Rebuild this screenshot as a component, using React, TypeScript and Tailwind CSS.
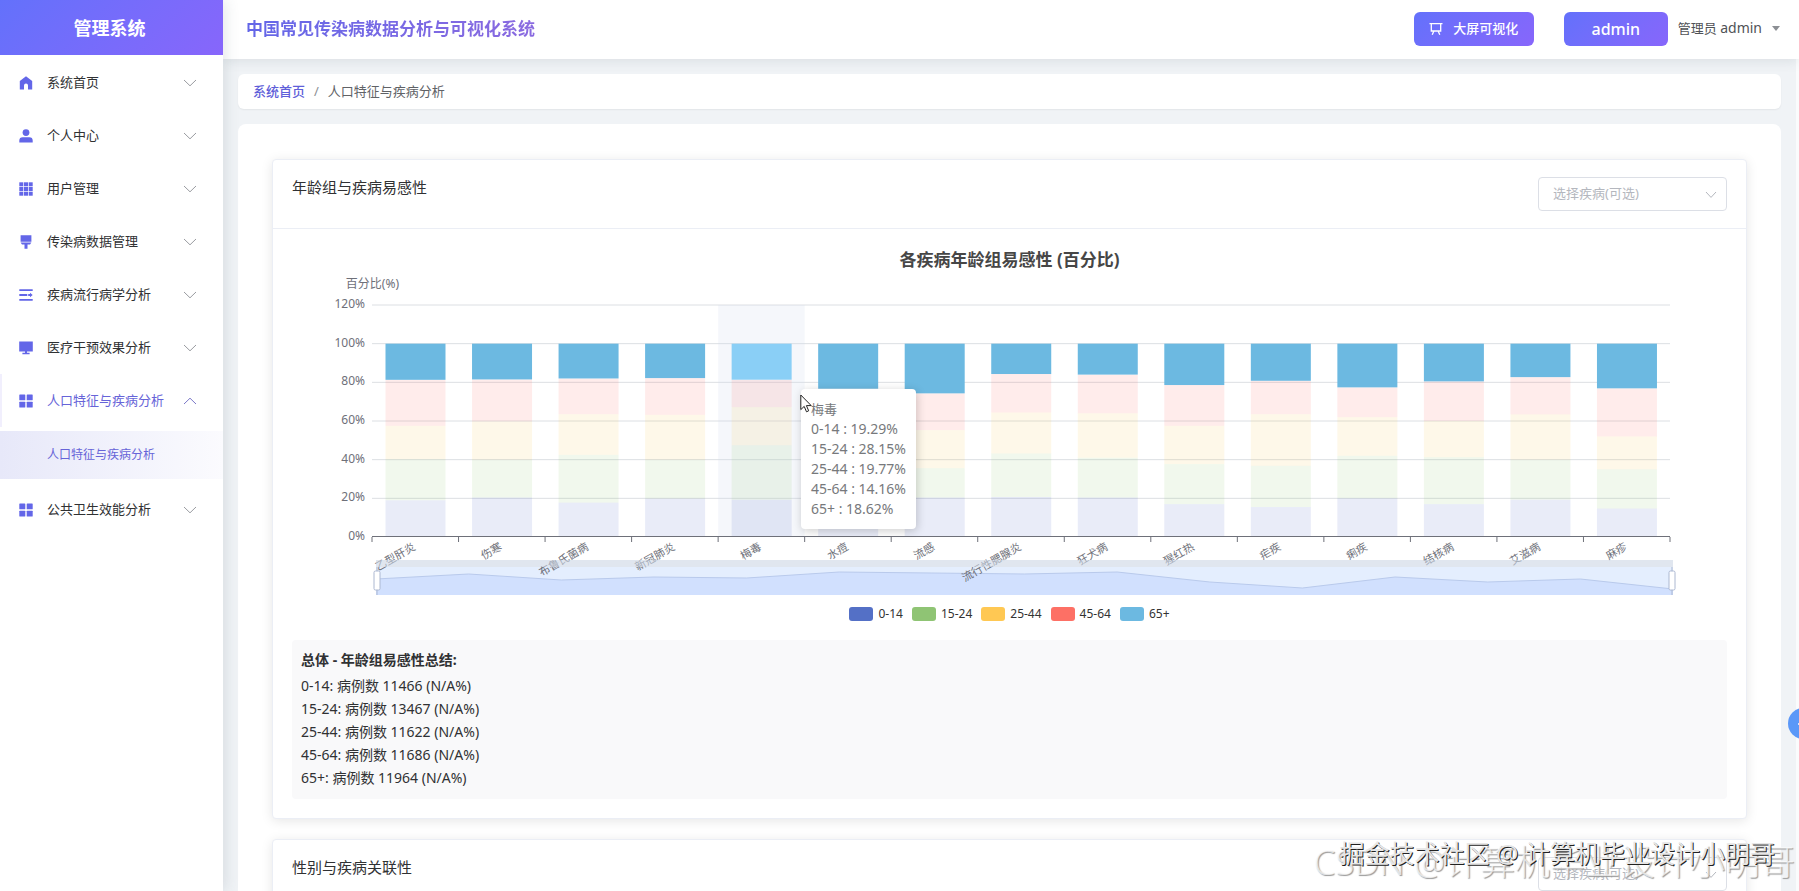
import type { ReactNode } from 'react';

const AGE_GROUPS = [
  { name: '0-14', color: '#5470c6', swatch: 'bg-[#5470c6]' },
  { name: '15-24', color: '#91cc75', swatch: 'bg-[#8fc474]' },
  { name: '25-44', color: '#fac858', swatch: 'bg-[#ffc853]' },
  { name: '45-64', color: '#ff6e63', swatch: 'bg-[#fd7065]' },
  { name: '65+', color: '#6cb9e1', swatch: 'bg-[#6cb9e1]' },
];

// upper bound of every age group in the stack, in percent
const DISEASES = [
  { name: '乙型肝炎', stack: [19, 40.2, 57.5, 81.3, 100] },
  { name: '伤寒', stack: [20.4, 40, 59.8, 81.5, 100] },
  { name: '布鲁氏菌病', stack: [17.8, 42.5, 63.5, 82, 100] },
  { name: '新冠肺炎', stack: [19.9, 40, 63.2, 82.2, 100] },
  { name: '梅毒', stack: [19.29, 47.44, 67.21, 81.37, 100] },
  { name: '水痘', stack: [20, 40, 58, 76.7, 100] },
  { name: '流感', stack: [20.4, 35.6, 55.3, 74.3, 100] },
  { name: '流行性腮腺炎', stack: [20.7, 43.2, 64.4, 84.3, 100] },
  { name: '狂犬病', stack: [20.4, 41, 64, 84, 100] },
  { name: '猩红热', stack: [17, 37.7, 57.5, 78.6, 100] },
  { name: '疟疾', stack: [15.5, 36.8, 63.5, 80.8, 100] },
  { name: '痢疾', stack: [20, 42, 62, 77.4, 100] },
  { name: '结核病', stack: [17, 41.3, 60, 80.5, 100] },
  { name: '艾滋病', stack: [19.3, 40, 63.4, 82.7, 100] },
  { name: '麻疹', stack: [14.7, 35, 52, 76.9, 100] },
];

const TOOLTIP = [
  '0-14 : 19.29%',
  '15-24 : 28.15%',
  '25-44 : 19.77%',
  '45-64 : 14.16%',
  '65+ : 18.62%',
];

const SUMMARY = [
  '0-14: 病例数 11466 (N/A%)',
  '15-24: 病例数 13467 (N/A%)',
  '25-44: 病例数 11622 (N/A%)',
  '45-64: 病例数 11686 (N/A%)',
  '65+: 病例数 11964 (N/A%)',
];

const Icon = ({ children }: { children: ReactNode }) => (
  <svg viewBox="0 0 14 14" className="h-3.5 w-3.5 shrink-0 text-[#6366e8]" fill="currentColor">
    {children}
  </svg>
);

const HomeIcon = () => (
  <Icon>
    <path d="M7 0.2 13.2 5V13.4H9V9.4a2 2 0 0 0-4 0v4H0.8V5Z" />
  </Icon>
);

const UserIcon = () => (
  <Icon>
    <circle cx="7" cy="3.6" r="3.4" />
    <path d="M0.3 13.6v-2A3.4 3.4 0 0 1 3.7 8.2h6.6a3.4 3.4 0 0 1 3.4 3.4v2Z" />
  </Icon>
);

const GridIcon = () => (
  <Icon>
    {[0.3, 5, 9.7].map((y) =>
      [0.3, 5, 9.7].map((x) => <rect key={`${x}-${y}`} x={x} y={y} width="4" height="4" />)
    )}
  </Icon>
);

const FunnelIcon = () => (
  <Icon>
    <path d="M1.6 0.2h10.8v6.6H1.6ZM1.6 7.6h10.8L11 9.4H8.5v4.4h-3V9.4H3Z" />
  </Icon>
);

const ListIcon = () => (
  <Icon>
    <path d="M0.3 1.2h13.4v1.9H0.3ZM0.3 6.1h8v1.8h-8ZM0.3 10.9h13.4v1.9H0.3ZM9.2 6.1H11V4.7L13.7 7 11 9.3V7.9H9.2Z" />
  </Icon>
);

const MonitorIcon = () => (
  <Icon>
    <path d="M0.2 0.6h13.6v10H0.2ZM6 10.6h2v1.2h2.6v1.4H3.4v-1.4H6Z" />
  </Icon>
);

const MenuIcon = () => (
  <Icon>
    <rect x="0.3" y="0.5" width="6" height="5.8" rx="0.6" />
    <rect x="7.7" y="0.5" width="6" height="5.8" rx="0.6" />
    <rect x="0.3" y="7.7" width="6" height="5.8" rx="0.6" />
    <rect x="7.7" y="7.7" width="6" height="5.8" rx="0.6" />
  </Icon>
);

const Chevron = ({ up = false }: { up?: boolean }) => (
  <svg viewBox="0 0 14 8" className="ml-auto h-2 w-3.5" fill="none" stroke={up ? '#7b78c8' : '#9a9ca1'}>
    <path d={up ? 'M1 7 7 1.2 13 7' : 'M1 1 7 6.8 13 1'} />
  </svg>
);

const MENU = [
  { label: '系统首页', icon: <HomeIcon /> },
  { label: '个人中心', icon: <UserIcon /> },
  { label: '用户管理', icon: <GridIcon /> },
  { label: '传染病数据管理', icon: <FunnelIcon /> },
  { label: '疾病流行病学分析', icon: <ListIcon /> },
  { label: '医疗干预效果分析', icon: <MonitorIcon /> },
  { label: '人口特征与疾病分析', icon: <MenuIcon />, children: ['人口特征与疾病分析'] },
  { label: '公共卫生效能分析', icon: <MenuIcon /> },
];

const Sidebar = () => (
  <aside className="relative z-20 w-[223px] shrink-0 bg-white shadow-[2px_0_14px_rgba(60,80,90,0.14)]">
    <div className="flex h-[55px] items-center justify-center bg-linear-135 from-[#6371fb] to-[#8766fb] pr-1 text-lg font-bold text-white">
      管理系统
    </div>
    <nav className="pt-px">
      <ul>
        {MENU.map((item) => (
          <li key={item.label}>
            <button
              type="button"
              aria-expanded={Boolean(item.children)}
              className={
                item.children
                  ? 'flex h-[53px] w-full items-center gap-3.5 border-l-2 border-[#f1effd] pr-[26px] pl-[17px] text-[13px] text-[#6764d8]'
                  : 'flex h-[53px] w-full items-center gap-3.5 pr-[26px] pl-[19px] text-[13px] text-[#303133]'
              }
            >
              {item.icon}
              {item.label}
              <Chevron up={Boolean(item.children)} />
            </button>
            {item.children?.map((child) => (
              <a
                key={child}
                href="#population"
                className="mt-1 mb-1 flex h-12 items-center bg-linear-to-r from-[#e7e8f9] to-[#fbfbfe] pl-[47px] text-xs text-[#6764d8]"
              >
                {child}
              </a>
            ))}
          </li>
        ))}
      </ul>
    </nav>
  </aside>
);

const Header = () => (
  <header className="relative z-10 flex h-[59px] shrink-0 items-center bg-white pr-[19px] pb-0.5 pl-[23px] shadow-[0_2px_12px_rgba(60,80,90,0.12)]">
    <h1 className="bg-linear-to-r from-[#6366e8] to-[#8a6ae0] bg-clip-text text-[17px] font-bold text-transparent">
      中国常见传染病数据分析与可视化系统
    </h1>
    <button
      type="button"
      className="ml-auto flex h-[34px] w-[120px] items-center justify-center gap-2.5 rounded-md bg-linear-135 from-[#6371fb] to-[#8766fb] text-[13px] font-medium text-white"
    >
      <svg viewBox="0 0 14 14" className="h-3.5 w-3.5" fill="none" stroke="currentColor" strokeWidth="1.3">
        <path d="M0.5 1.6h13M2.3 1.6v7.4h9.4V1.6M4.8 9.2 3.2 12.8M9.2 9.2l1.6 3.6" />
      </svg>
      大屏可视化
    </button>
    <button
      type="button"
      className="ml-[30px] h-[34px] w-[104px] rounded-md bg-linear-135 from-[#6371fb] to-[#8766fb] text-base font-medium text-white"
    >
      admin
    </button>
    <button type="button" className="ml-2.5 flex items-center gap-2.5 text-[13px] text-[#505256]">
      <span>
        管理员 <span className="text-sm">admin</span>
      </span>
      <svg viewBox="0 0 8 5" className="h-[5px] w-2" fill="#8c8f94">
        <path d="M0 0h8L4 5Z" />
      </svg>
    </button>
  </header>
);

const DiseaseSelect = ({ id }: { id: string }) => (
  <div className="relative w-[189px]">
    <label htmlFor={id} className="absolute inset-0" aria-label="选择疾病" />
    <select
      id={id}
      className="relative h-[34px] w-full appearance-none rounded-sm border border-[#dcdfe6] bg-white px-3.5 text-[13px] text-[#b4b7be]"
    >
      <option>选择疾病(可选)</option>
    </select>
    <svg viewBox="0 0 12 8" className="pointer-events-none absolute top-3.5 right-2.5 h-2 w-3" fill="none" stroke="#b4b7be">
      <path d="M1 1 6 6.4 11 1" />
    </svg>
  </div>
);

const PLOT_LEFT = 80;
const PLOT_RIGHT = 1378;
const PLOT_TOP = 33;
const AXIS_Y = 265;
const BAND = (PLOT_RIGHT - PLOT_LEFT) / DISEASES.length;
const BAR_WIDTH = 60;
const HOVERED = 4;

const toY = (percent: number) => AXIS_Y - (percent / 120) * (AXIS_Y - PLOT_TOP);

// overview curve inside the zoom slider
const TREND = [307, 302, 308, 305, 306, 300, 301, 302, 300, 310, 316, 305, 310, 307, 317];
const SLIDER_LEFT = 84;
const SLIDER_RIGHT = 1381;
const trendPoints = TREND.map(
  (y, i) => `${SLIDER_LEFT + (i * (SLIDER_RIGHT - SLIDER_LEFT)) / (TREND.length - 1)},${y}`
).join(' ');

const AgeChart = () => (
  <svg viewBox="0 0 1435 327" className="block w-full" role="img" aria-label="各疾病年龄组易感性">
    <text x="107" y="16" textAnchor="end" fontSize="12" fill="#6e7079">
      百分比(%)
    </text>
    {[0, 20, 40, 60, 80, 100, 120].map((tick) => (
      <g key={tick}>
        <text x="73" y={toY(tick) + 3} textAnchor="end" fontSize="12" fill="#6e7079">
          {tick}%
        </text>
        {tick > 0 && (
          <line x1={PLOT_LEFT} x2={PLOT_RIGHT} y1={toY(tick)} y2={toY(tick)} stroke="#dcdfe3" />
        )}
      </g>
    ))}

    <rect
      x={PLOT_LEFT + HOVERED * BAND}
      y={PLOT_TOP}
      width={BAND}
      height={AXIS_Y - PLOT_TOP}
      fill="#d2dbee"
      fillOpacity="0.22"
    />

    {DISEASES.map((disease, i) =>
      disease.stack.map((top, level) => {
        const bottom = level === 0 ? 0 : disease.stack[level - 1];
        const isTop = level === AGE_GROUPS.length - 1;
        return (
          <rect
            key={`${disease.name}-${level}`}
            x={PLOT_LEFT + i * BAND + 13.5}
            y={toY(top)}
            width={BAR_WIDTH}
            height={toY(bottom) - toY(top)}
            fill={isTop && i === HOVERED ? '#8acff6' : AGE_GROUPS[level].color}
            fillOpacity={isTop ? 1 : 0.13}
          />
        );
      })
    )}

    <line x1={PLOT_LEFT} x2={PLOT_RIGHT} y1={AXIS_Y - 0.5} y2={AXIS_Y - 0.5} stroke="#6e7079" />
    {Array.from({ length: DISEASES.length + 1 }, (_, i) => (
      <line
        key={i}
        x1={PLOT_LEFT + i * BAND}
        x2={PLOT_LEFT + i * BAND}
        y1={AXIS_Y}
        y2={AXIS_Y + 5}
        stroke="#6e7079"
      />
    ))}

    {/* zoom slider: body and curve lie under the labels, the move bar over them */}
    <rect x={SLIDER_LEFT} y="295" width={SLIDER_RIGHT - SLIDER_LEFT} height="28" fill="#e4eefe" />
    <polygon points={`${SLIDER_LEFT},323 ${trendPoints} ${SLIDER_RIGHT},323`} fill="#d1e0fe" />
    <polyline points={trendPoints} fill="none" stroke="#b9caec" />
    {DISEASES.map((disease, i) => (
      <text
        key={disease.name}
        textAnchor="end"
        fontSize="11"
        fill="#6e7079"
        transform={`translate(${PLOT_LEFT + (i + 0.5) * BAND - 3} ${AXIS_Y + 5}) rotate(-30)`}
        y="8"
      >
        {disease.name}
      </text>
    ))}
    <rect x={SLIDER_LEFT} y="288" width={SLIDER_RIGHT - SLIDER_LEFT} height="7" fill="#cbd5e4" fillOpacity="0.6" />
    {[SLIDER_LEFT + 1, SLIDER_RIGHT - 1].map((x) => (
      <g key={x} stroke="#acb8d1">
        <line x1={x} x2={x} y1="295" y2="323" />
        <rect x={x - 3} y="299" width="6" height="19" rx="1.5" fill="#fff" />
      </g>
    ))}
  </svg>
);

const Tooltip = () => (
  <div className="absolute top-[141px] left-[509px] w-[115px] rounded-sm bg-white px-2.5 pt-2.5 pb-2.5 text-sm leading-5 whitespace-nowrap text-[#77797c] shadow-[1px_2px_10px_rgba(0,0,0,0.2)]">
    <p className="text-[13px] leading-5">梅毒</p>
    {TOOLTIP.map((line) => (
      <p key={line}>{line}</p>
    ))}
  </div>
);

const Cursor = () => (
  <svg viewBox="0 0 12 19" className="absolute top-[146px] left-[508px] h-[19px] w-3" fill="#fff" stroke="#222">
    <path d="M0.8 1v14.6l3.4-3.2 2.3 5.4 2.2-1-2.3-5.2h4.8Z" />
  </svg>
);

const Card = ({ title, selectId, children }: { title: string; selectId: string; children?: ReactNode }) => (
  <section className="rounded-sm border border-[#ebeef5] bg-white shadow-[0_2px_12px_rgba(0,0,0,0.1)]">
    <div className="flex h-[69px] items-start justify-between border-b border-[#ebeef5] px-[19px] pt-[17px]">
      <h2 className="text-[15px] leading-5 text-[#303133]">{title}</h2>
      <DiseaseSelect id={selectId} />
    </div>
    {children}
  </section>
);

const Watermark = () => (
  <div aria-hidden="true" className="pointer-events-none absolute right-0 bottom-0 z-30 h-[60px] w-[490px] whitespace-nowrap">
    <p className="absolute right-1 bottom-1 text-[35px] leading-[50px] font-light text-white/70 [text-shadow:1px_1px_1px_#999]">
      CSDN @计算机毕业设计小明哥
    </p>
    <p className="absolute right-6 bottom-[18px] text-[25px] leading-10 text-[#e6e6e6] [text-shadow:1px_1px_0_#222]">
      掘金技术社区 @ 计算机毕业设计小明哥
    </p>
  </div>
);

const App = () => (
  <div className="relative flex h-screen overflow-hidden bg-[#f0f3f6] font-['Noto_Sans','Noto_Sans_CJK_SC',sans-serif]">
    <Sidebar />
    <div className="flex min-w-0 flex-1 flex-col">
      <Header />
      <main className="min-h-0 flex-1 overflow-hidden border-r-[3px] border-[#fafbfc] px-[15px] pt-[15px]">
        <nav className="flex h-[35px] items-center gap-[9px] rounded-md bg-white px-[15px] text-[13px] shadow-[0_1px_2px_rgba(0,0,0,0.06)]">
          <a href="#home" className="font-medium text-[#5f5fd9]">
            系统首页
          </a>
          <span className="text-[#8c8f94]">/</span>
          <span className="text-[#606266]">人口特征与疾病分析</span>
        </nav>

        <div className="mt-[15px] flex flex-col gap-5 rounded-lg bg-white px-[34px] pt-[35px] pb-[35px]">
          <Card title="年龄组与疾病易感性" selectId="age-disease">
            <div className="px-[19px] pt-[19px] pb-[19px]">
              <div className="relative">
                <h3 className="text-center text-[17px] leading-6 font-bold text-[#464646]">
                  各疾病年龄组易感性 (百分比)
                </h3>
                <AgeChart />
                <ul className="mt-[5px] flex h-5 items-center justify-center gap-[9px] text-xs text-[#333]">
                  {AGE_GROUPS.map((group) => (
                    <li key={group.name} className="flex items-center gap-[5px]">
                      <span className={`h-3.5 w-6 rounded-[3px] ${group.swatch}`} />
                      {group.name}
                    </li>
                  ))}
                </ul>
                <Tooltip />
                <Cursor />
              </div>

              <div className="mt-4 rounded-sm bg-[#f9f9fa] px-[9px] pt-2 pb-2.5 text-sm text-[#303133]">
                <h4 className="leading-6 font-bold">总体 - 年龄组易感性总结:</h4>
                <ul className="mt-0.5 leading-[23px]">
                  {SUMMARY.map((line) => (
                    <li key={line}>{line}</li>
                  ))}
                </ul>
              </div>
            </div>
          </Card>

          <Card title="性别与疾病关联性" selectId="gender-disease" />
        </div>
      </main>
    </div>

    <button
      type="button"
      aria-label="打开助手"
      className="absolute top-[708px] -right-5 z-30 flex h-[31px] w-[31px] items-center rounded-full bg-[#5b98f8] pl-2.5"
    >
      <span className="h-0.5 w-2 rounded-full bg-white" />
    </button>
    <Watermark />
  </div>
);

export default App;
